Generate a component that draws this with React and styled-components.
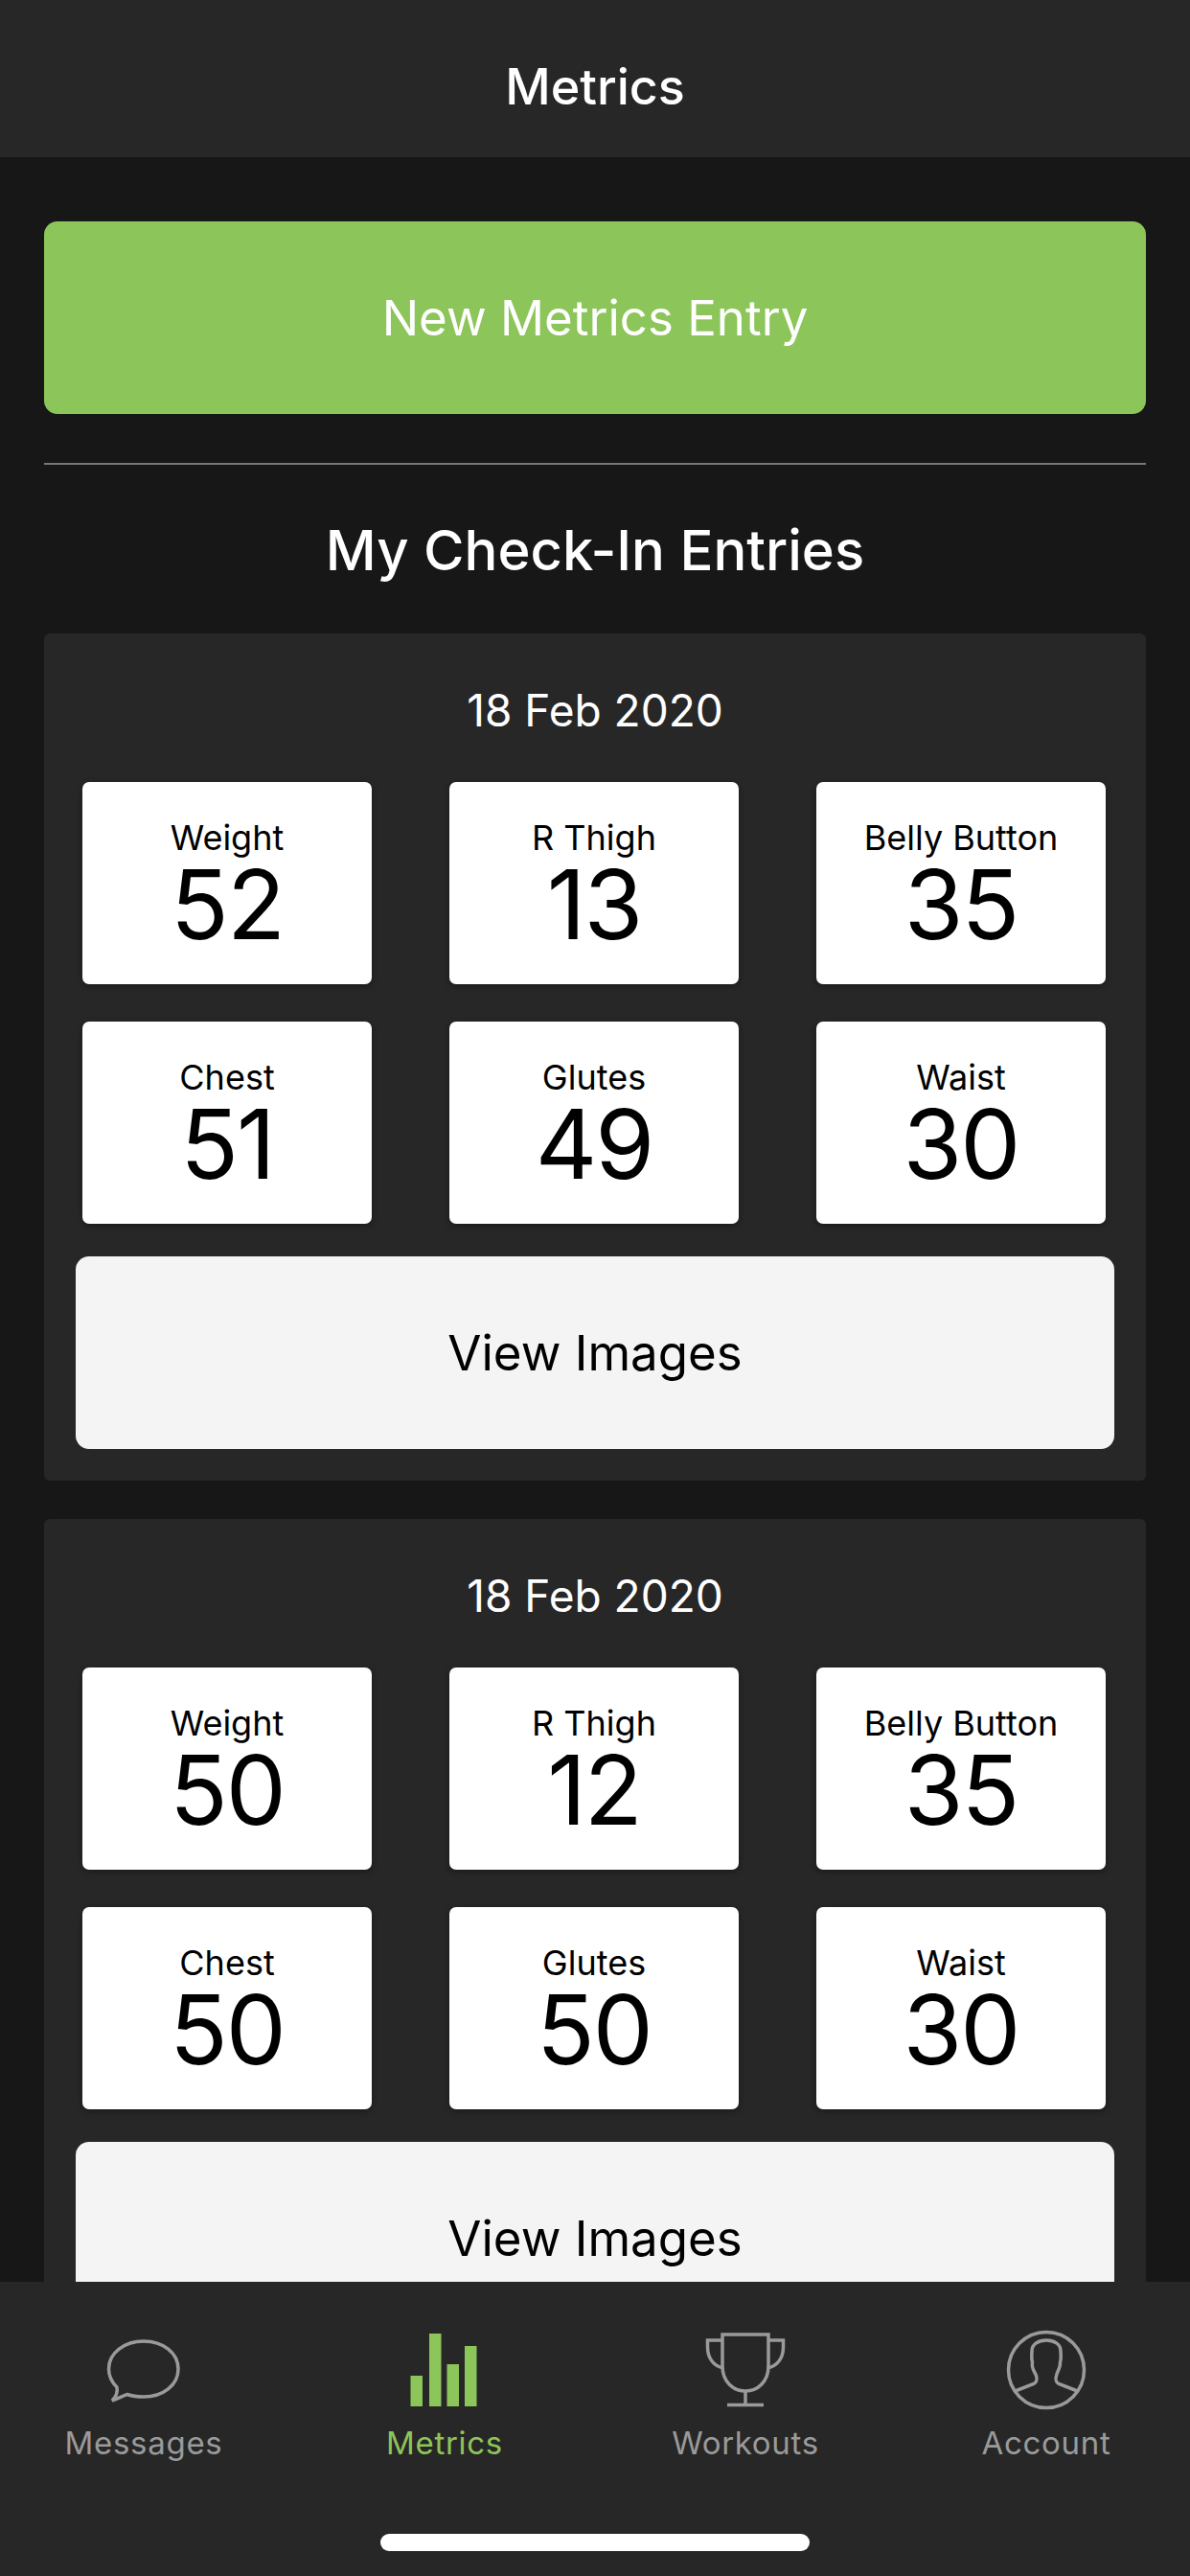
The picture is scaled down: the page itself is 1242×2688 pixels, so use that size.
import React from "react";
import styled, { createGlobalStyle } from "styled-components";

const GlobalStyle = createGlobalStyle`
  html, body {
    margin: 0;
    padding: 0;
    background: #171717;
  }
  * {
    box-sizing: border-box;
  }
`;

const Screen = styled.div`
  width: 1242px;
  height: 2688px;
  display: flex;
  flex-direction: column;
  overflow: hidden;
  background: #171717;
  font-family: Inter, "Liberation Sans", sans-serif;
`;

const Header = styled.header`
  flex: none;
  height: 164px;
  display: flex;
  align-items: center;
  justify-content: center;
  padding-top: 16px;
  background: #272727;
  color: #fff;
  font-size: 52px;
  font-weight: 500;
`;

const Content = styled.main`
  flex: 1;
  min-height: 0;
  overflow: hidden;
  padding: 67px 46px 0;
`;

const NewEntry = styled.button`
  display: block;
  width: 100%;
  height: 201px;
  border: 0;
  border-radius: 14px;
  background: #8cc559;
  color: #fff;
  font: 400 51px Inter, "Liberation Sans", sans-serif;
`;

const Divider = styled.hr`
  height: 2px;
  margin: 51px 0 0;
  border: 0;
  background: #777;
`;

const Heading = styled.h2`
  margin: 53px 0 51px;
  color: #fff;
  font-size: 58px;
  font-weight: 500;
  line-height: 72px;
  text-align: center;
`;

const Card = styled.section`
  height: 884px;
  margin-bottom: 40px;
  padding: 52px 33px 33px;
  border-radius: 6px;
  background: #272727;
`;

const CardDate = styled.div`
  color: #fff;
  font-size: 46px;
  line-height: 56px;
  text-align: center;
`;

const TileGrid = styled.div`
  display: grid;
  grid-template-columns: repeat(3, 302px);
  grid-auto-rows: 211px;
  column-gap: 81px;
  row-gap: 39px;
  margin-top: 47px;
  padding: 0 7px;
`;

const Tile = styled.div`
  display: flex;
  flex-direction: column;
  align-items: center;
  padding-top: 38px;
  border-radius: 7px;
  background: #fff;
  color: #000;
  box-shadow: 0 2px 6px rgba(0, 0, 0, 0.35);
`;

const TileLabel = styled.span`
  font-size: 36px;
  line-height: 40px;
`;

const TileValue = styled.span`
  font-size: 100px;
  line-height: 100px;
  letter-spacing: -2px;
`;

const ViewImages = styled.button`
  display: block;
  width: 100%;
  height: 201px;
  margin-top: 34px;
  border: 0;
  border-radius: 14px;
  background: #f4f4f4;
  color: #000;
  font: 400 51px Inter, "Liberation Sans", sans-serif;
`;

const TabBar = styled.nav`
  flex: none;
  height: 307px;
  display: flex;
  flex-direction: column;
  background: #272727;
`;

const Tabs = styled.div`
  display: grid;
  grid-template-columns: repeat(4, 314px);
  justify-content: center;
  padding-top: 50px;
`;

const Tab = styled.div`
  display: flex;
  flex-direction: column;
  align-items: center;
  color: ${(p) => (p.$active ? "#8cc559" : "#9a9a9a")};
`;

const TabIcon = styled.svg`
  display: block;
  width: 90px;
  height: 90px;
  fill: none;
  stroke: currentColor;
  stroke-width: 3.5;
`;

const BarsIcon = styled(TabIcon)`
  fill: currentColor;
  stroke: none;
`;

const TabLabel = styled.span`
  margin-top: 8px;
  font-size: 33px;
  line-height: 40px;
  letter-spacing: 0.7px;
`;

const HomeIndicator = styled.div`
  width: 448px;
  height: 18px;
  margin: 75px auto 0;
  border-radius: 9px;
  background: #fff;
`;

const MessageIcon = () => (
  <TabIcon viewBox="0 0 90 90">
    <path d="M12 74 C18 72 23 69 28 67.500 C32 69 39 70 45 70 C65 70 81 58 81 41 C81 24 65 12 45 12 C25 12 8.500 24 8.500 41 C8.500 49 12 55 17 60 C18 65 16 70 12 74 Z" />
  </TabIcon>
);

const MetricsIcon = () => (
  <BarsIcon viewBox="0 0 90 90">
    <rect x="9.500" y="48" width="12.500" height="32" />
    <rect x="29" y="4" width="12.500" height="76" />
    <rect x="47.500" y="36" width="12.500" height="44" />
    <rect x="66" y="17" width="12.500" height="63" />
  </BarsIcon>
);

const TrophyIcon = () => (
  <TabIcon viewBox="0 0 90 90">
    <path d="M21 5 H69 V38 C69 54 58 64 45 64 C32 64 21 54 21 38 Z" />
    <path d="M21 11 H5.500 V18 C5.500 30 12 38 22 40" />
    <path d="M69 11 H84.500 V18 C84.500 30 78 38 68 40" />
    <path d="M45 64 V78.500" />
    <path d="M26 78.500 H64" />
  </TabIcon>
);

const AccountIcon = () => (
  <TabIcon viewBox="0 0 90 90">
    <circle cx="45" cy="42" r="39.500" />
    <path d="M12.500 64 L32 56.500 C35 55 35.500 51 34.500 48 C33 44 29 40 30.500 34 C29 30 30 26 30 22 C30 15 37 11 45 11 C53 11 60 15 60 22 C60 26 61 30 59.500 34 C60 40 56 44 55.500 48 C54.500 51 55 55 58 56.500 L77.500 64" />
  </TabIcon>
);

const tabs = [
  { label: "Messages", Icon: MessageIcon },
  { label: "Metrics", Icon: MetricsIcon, active: true },
  { label: "Workouts", Icon: TrophyIcon },
  { label: "Account", Icon: AccountIcon },
];

const entries = [
  {
    date: "18 Feb 2020",
    values: [
      ["Weight", 52],
      ["R Thigh", 13],
      ["Belly Button", 35],
      ["Chest", 51],
      ["Glutes", 49],
      ["Waist", 30],
    ],
  },
  {
    date: "18 Feb 2020",
    values: [
      ["Weight", 50],
      ["R Thigh", 12],
      ["Belly Button", 35],
      ["Chest", 50],
      ["Glutes", 50],
      ["Waist", 30],
    ],
  },
];

function App() {
  return (
    <Screen>
      <GlobalStyle />
      <Header>Metrics</Header>
      <Content>
        <NewEntry>New Metrics Entry</NewEntry>
        <Divider />
        <Heading>My Check-In Entries</Heading>
        {entries.map((entry, i) => (
          <Card key={i}>
            <CardDate>{entry.date}</CardDate>
            <TileGrid>
              {entry.values.map(([label, value]) => (
                <Tile key={label}>
                  <TileLabel>{label}</TileLabel>
                  <TileValue>{value}</TileValue>
                </Tile>
              ))}
            </TileGrid>
            <ViewImages>View Images</ViewImages>
          </Card>
        ))}
      </Content>
      <TabBar>
        <Tabs>
          {tabs.map(({ label, Icon, active }) => (
            <Tab key={label} $active={active}>
              <Icon />
              <TabLabel>{label}</TabLabel>
            </Tab>
          ))}
        </Tabs>
        <HomeIndicator />
      </TabBar>
    </Screen>
  );
}

export default App;
